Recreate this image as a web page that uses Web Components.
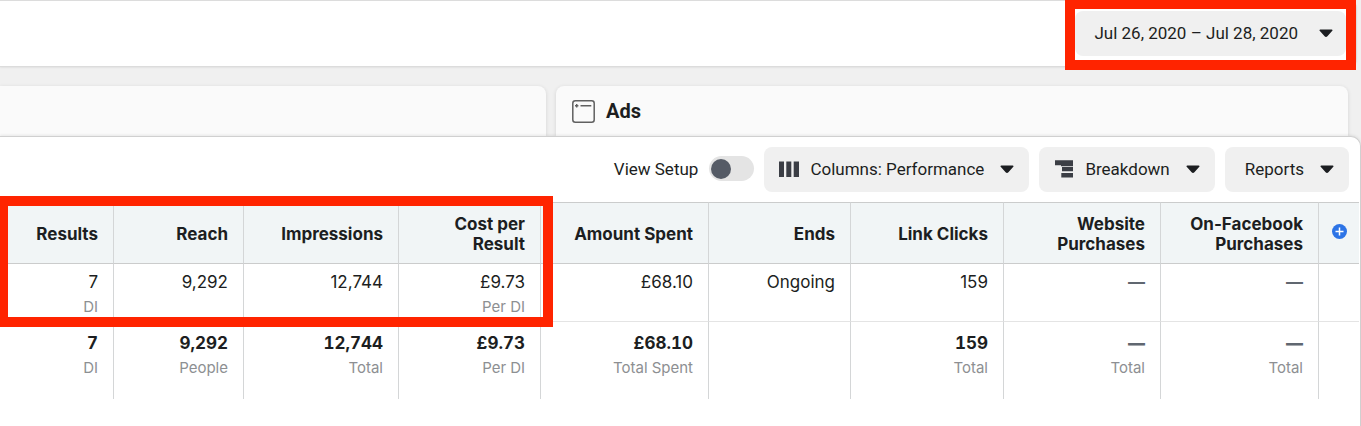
<!DOCTYPE html>
<html lang="en">
<head>
<meta charset="utf-8">
<title>Ads Manager</title>
<style>
  html { height: 100%; }
  body { margin: 0; min-height: 100%; display: flex; flex-direction: column; background: #f0f0f0; color: #1c1e21; font: 17px/24px Roboto, "Liberation Sans", sans-serif; overflow: hidden; }
  ads-panel { flex: 1; }
</style>
</head>
<body>
<top-bar>
  <callout-frame class="date"><menu-button wide>Jul 26, 2020 – Jul 28, 2020</menu-button></callout-frame>
</top-bar>
<level-tabs></level-tabs>
<ads-panel>
  <toggle-switch slot="tools">View Setup</toggle-switch>
  <menu-button slot="tools" icon="columns">Columns: Performance</menu-button>
  <menu-button slot="tools" icon="breakdown">Breakdown</menu-button>
  <menu-button slot="tools">Reports</menu-button>
  <metrics-table></metrics-table>
</ads-panel>

<script>
const define = (name, html, setup) => {
  const template = document.createElement("template");
  template.innerHTML = html;
  customElements.define(name, class extends HTMLElement {
    constructor() {
      super();
      this.attachShadow({ mode: "open" }).append(template.content.cloneNode(true));
    }
    connectedCallback() { if (setup) setup(this, this.shadowRoot); }
  });
};

define("top-bar", `
  <style>
    :host { display: block; padding-right: 4px; }
    header { display: flex; justify-content: flex-end; box-sizing: border-box; height: 67px; padding: 10px 10px 10px 0; background: #fff; border: 1px solid #dcdcdc; border-left: 0; border-radius: 0 8px 8px 0; box-shadow: 0 1px 2px rgba(0,0,0,.06); }
  </style>
  <header><slot></slot></header>`);

/* Red frame that lies around whatever is slotted into it. */
define("callout-frame", `
  <style>
    :host { display: block; position: relative; }
    div { position: absolute; inset: -12px -10px -14px -10px; border: 10px solid #ff2400; pointer-events: none; z-index: 2; }
  </style>
  <slot></slot><div></div>`);

const icons = {
  columns: `<svg width="20" height="20" viewBox="0 0 20 20" fill="#3b3e45"><path d="M0 2.500h5v15.500H0zM7.300 2.500h5v15.500h-5zM14.700 2.500h5.300v15.500h-5.300z"/></svg>`,
  breakdown: `<svg width="20" height="20" viewBox="0 0 20 20" fill="#3b3e45"><path d="M1 1.300h18v5H1zM7 6h12v1.200H7zM8 8h11v4.300H8zM7.300 14h11.700v4.600H7.300z"/></svg>`
};

define("menu-button", `
  <style>
    :host { display: block; }
    button { display: flex; align-items: center; height: 45px; margin: 0; padding: 0 15px 2px 20px; border: 0; border-radius: 8px; background: #f0f0f0; color: inherit; font: inherit; white-space: nowrap; }
    .icon { display: none; margin-right: 11px; }
    svg { display: block; }
    .caret { margin-left: 16px; }
    :host([icon]) button { padding-left: 15px; }
    :host([icon]) .icon { display: block; }
    :host([wide]) button { padding: 0 13px 2px 19px; }
    :host([wide]) .caret { margin-left: 21px; }
  </style>
  <button type="button"><span class="icon"></span><slot></slot>
    <svg class="caret" width="14" height="10" viewBox="0 0 14 10" fill="#1c1e21"><path d="M1.300 1.500h11.400c.8 0 1.100.8.600 1.300L8.400 8.200c-.8.900-2 .9-2.800 0L.7 2.800C.2 2.300.500 1.500 1.300 1.500z"/></svg>
  </button>`,
  (host, root) => { root.querySelector(".icon").innerHTML = icons[host.getAttribute("icon")] || ""; });

define("toggle-switch", `
  <style>
    :host { display: block; }
    label { display: flex; align-items: center; gap: 11px; padding-bottom: 2px; }
    input { appearance: none; box-sizing: border-box; width: 45px; height: 25px; margin: 0; padding: 3px 2px; border-radius: 13px; background: #e4e4e4; }
    input::before { content: ""; display: block; width: 20px; height: 20px; border-radius: 50%; background: #555b66; }
    input:checked::before { margin-left: auto; }
  </style>
  <label><slot></slot><input type="checkbox" role="switch"></label>`);

define("level-tabs", `
  <style>
    :host { display: grid; grid-template-columns: 546fr 792fr; gap: 10px; padding: 19px 13px 0 0; }
    div { box-sizing: border-box; height: 50px; background: #fafafa; border-radius: 8px 8px 0 0; box-shadow: 0 1px 4px rgba(0,0,0,.12); }
    .previous { border-top-left-radius: 0; }
    .ads { display: flex; align-items: center; gap: 11px; padding-left: 16px; }
    h2 { margin: 0; font-size: 20px; line-height: 24px; font-weight: 700; }
  </style>
  <div class="previous"></div>
  <div class="ads">
    <svg width="23" height="23" viewBox="0 0 23 23" fill="none" stroke="#606060" stroke-width="1.500"><rect x=".8" y=".8" width="21.400" height="21.400" rx="2.500"/><path d="M8.500 5.700h10.800M3 5.700h3.400M4.700 4v3.400" stroke-width="1.400"/></svg>
    <h2>Ads</h2>
  </div>`);

define("ads-panel", `
  <style>
    :host { display: block; position: relative; background: #fff; border: solid #d0d0d0; border-width: 1px 1px 0 0; border-radius: 0 10px 0 0; box-shadow: 0 -1px 3px rgba(0,0,0,.08); }
    .tools { display: flex; justify-content: flex-end; align-items: center; gap: 10px; padding: 10px 11px 10px 0; }
  </style>
  <div class="tools"><slot name="tools"></slot></div>
  <slot></slot>`);

define("metrics-table", `
  <style>
    :host { display: block; position: relative; padding-right: 1px; font: 17px/24px Inter, "Liberation Sans", sans-serif; }
    table { width: 100%; table-layout: fixed; border-collapse: separate; border-spacing: 0; }
    th, td { box-sizing: border-box; padding: 0 15px 0 0; text-align: right; border-right: 1px solid #d4d6d7; }
    th { height: 62px; padding-top: 2px; background: #f1f5f6; border-top: 1px solid #cbcccc; border-bottom: 1px solid #cbcccc; font-weight: 700; line-height: 20px; vertical-align: middle; }
    th:last-child, td:last-child { border-right: 0; padding: 2px 0 0; text-align: center; }
    td { vertical-align: top; }
    tbody td { height: 58px; padding-top: 6px; border-bottom: 1px solid #e4e4e4; }
    tfoot td { height: 77px; padding-top: 9px; font-weight: 700; font-variant-numeric: tabular-nums; }
    small { display: block; font-size: 15px; line-height: 26px; font-weight: 400; color: #8d8f92; }
    .none { color: #606770; font-weight: 700; }
    tfoot .none { font-weight: 900; }
    button { display: block; margin: 0 auto; padding: 0 0 5px; border: 0; background: none; }
    svg { display: block; }
    .frame { position: absolute; top: -6px; left: -2px; width: 535px; height: 111px; border: 10px solid #ff2400; pointer-events: none; }
  </style>
  <table>
    <colgroup></colgroup>
    <thead><tr></tr></thead>
    <tbody><tr></tr></tbody>
    <tfoot><tr></tr></tfoot>
  </table>
  <div class="frame"></div>`,
  (host, root) => {
    const dash = '<span class="none">—</span>';
    const columns = [
      ["auto", "Results", "7<small>DI</small>", "7<small>DI</small>"],
      ["130px", "Reach", "9,292", "9,292<small>People</small>"],
      ["155px", "Impressions", "12,744", "12,744<small>Total</small>"],
      ["142px", "Cost per<br>Result", "£9.73<small>Per DI</small>", "£9.73<small>Per DI</small>"],
      ["168px", "Amount Spent", "£68.10", "£68.10<small>Total Spent</small>"],
      ["142px", "Ends", "Ongoing", ""],
      ["153px", "Link Clicks", "159", "159<small>Total</small>"],
      ["157px", "Website<br>Purchases", dash, dash + "<small>Total</small>"],
      ["158px", "On-Facebook<br>Purchases", dash, dash + "<small>Total</small>"],
      ["40px", '<button type="button" aria-label="Add column"><svg width="15" height="15" viewBox="0 0 15 15"><circle cx="7.500" cy="7.500" r="7.500" fill="#2d74e6"/><path d="M7.500 3.500v8M3.500 7.500h8" stroke="#fff" stroke-width="1.500"/></svg></button>', "", ""]
    ];
    root.querySelector("colgroup").innerHTML = columns.map(c => `<col style="width:${c[0]}">`).join("");
    root.querySelector("thead tr").innerHTML = columns.map(c => `<th scope="col">${c[1]}</th>`).join("");
    root.querySelector("tbody tr").innerHTML = columns.map(c => `<td>${c[2]}</td>`).join("");
    root.querySelector("tfoot tr").innerHTML = columns.map(c => `<td>${c[3]}</td>`).join("");
  });
</script>
</body>
</html>
